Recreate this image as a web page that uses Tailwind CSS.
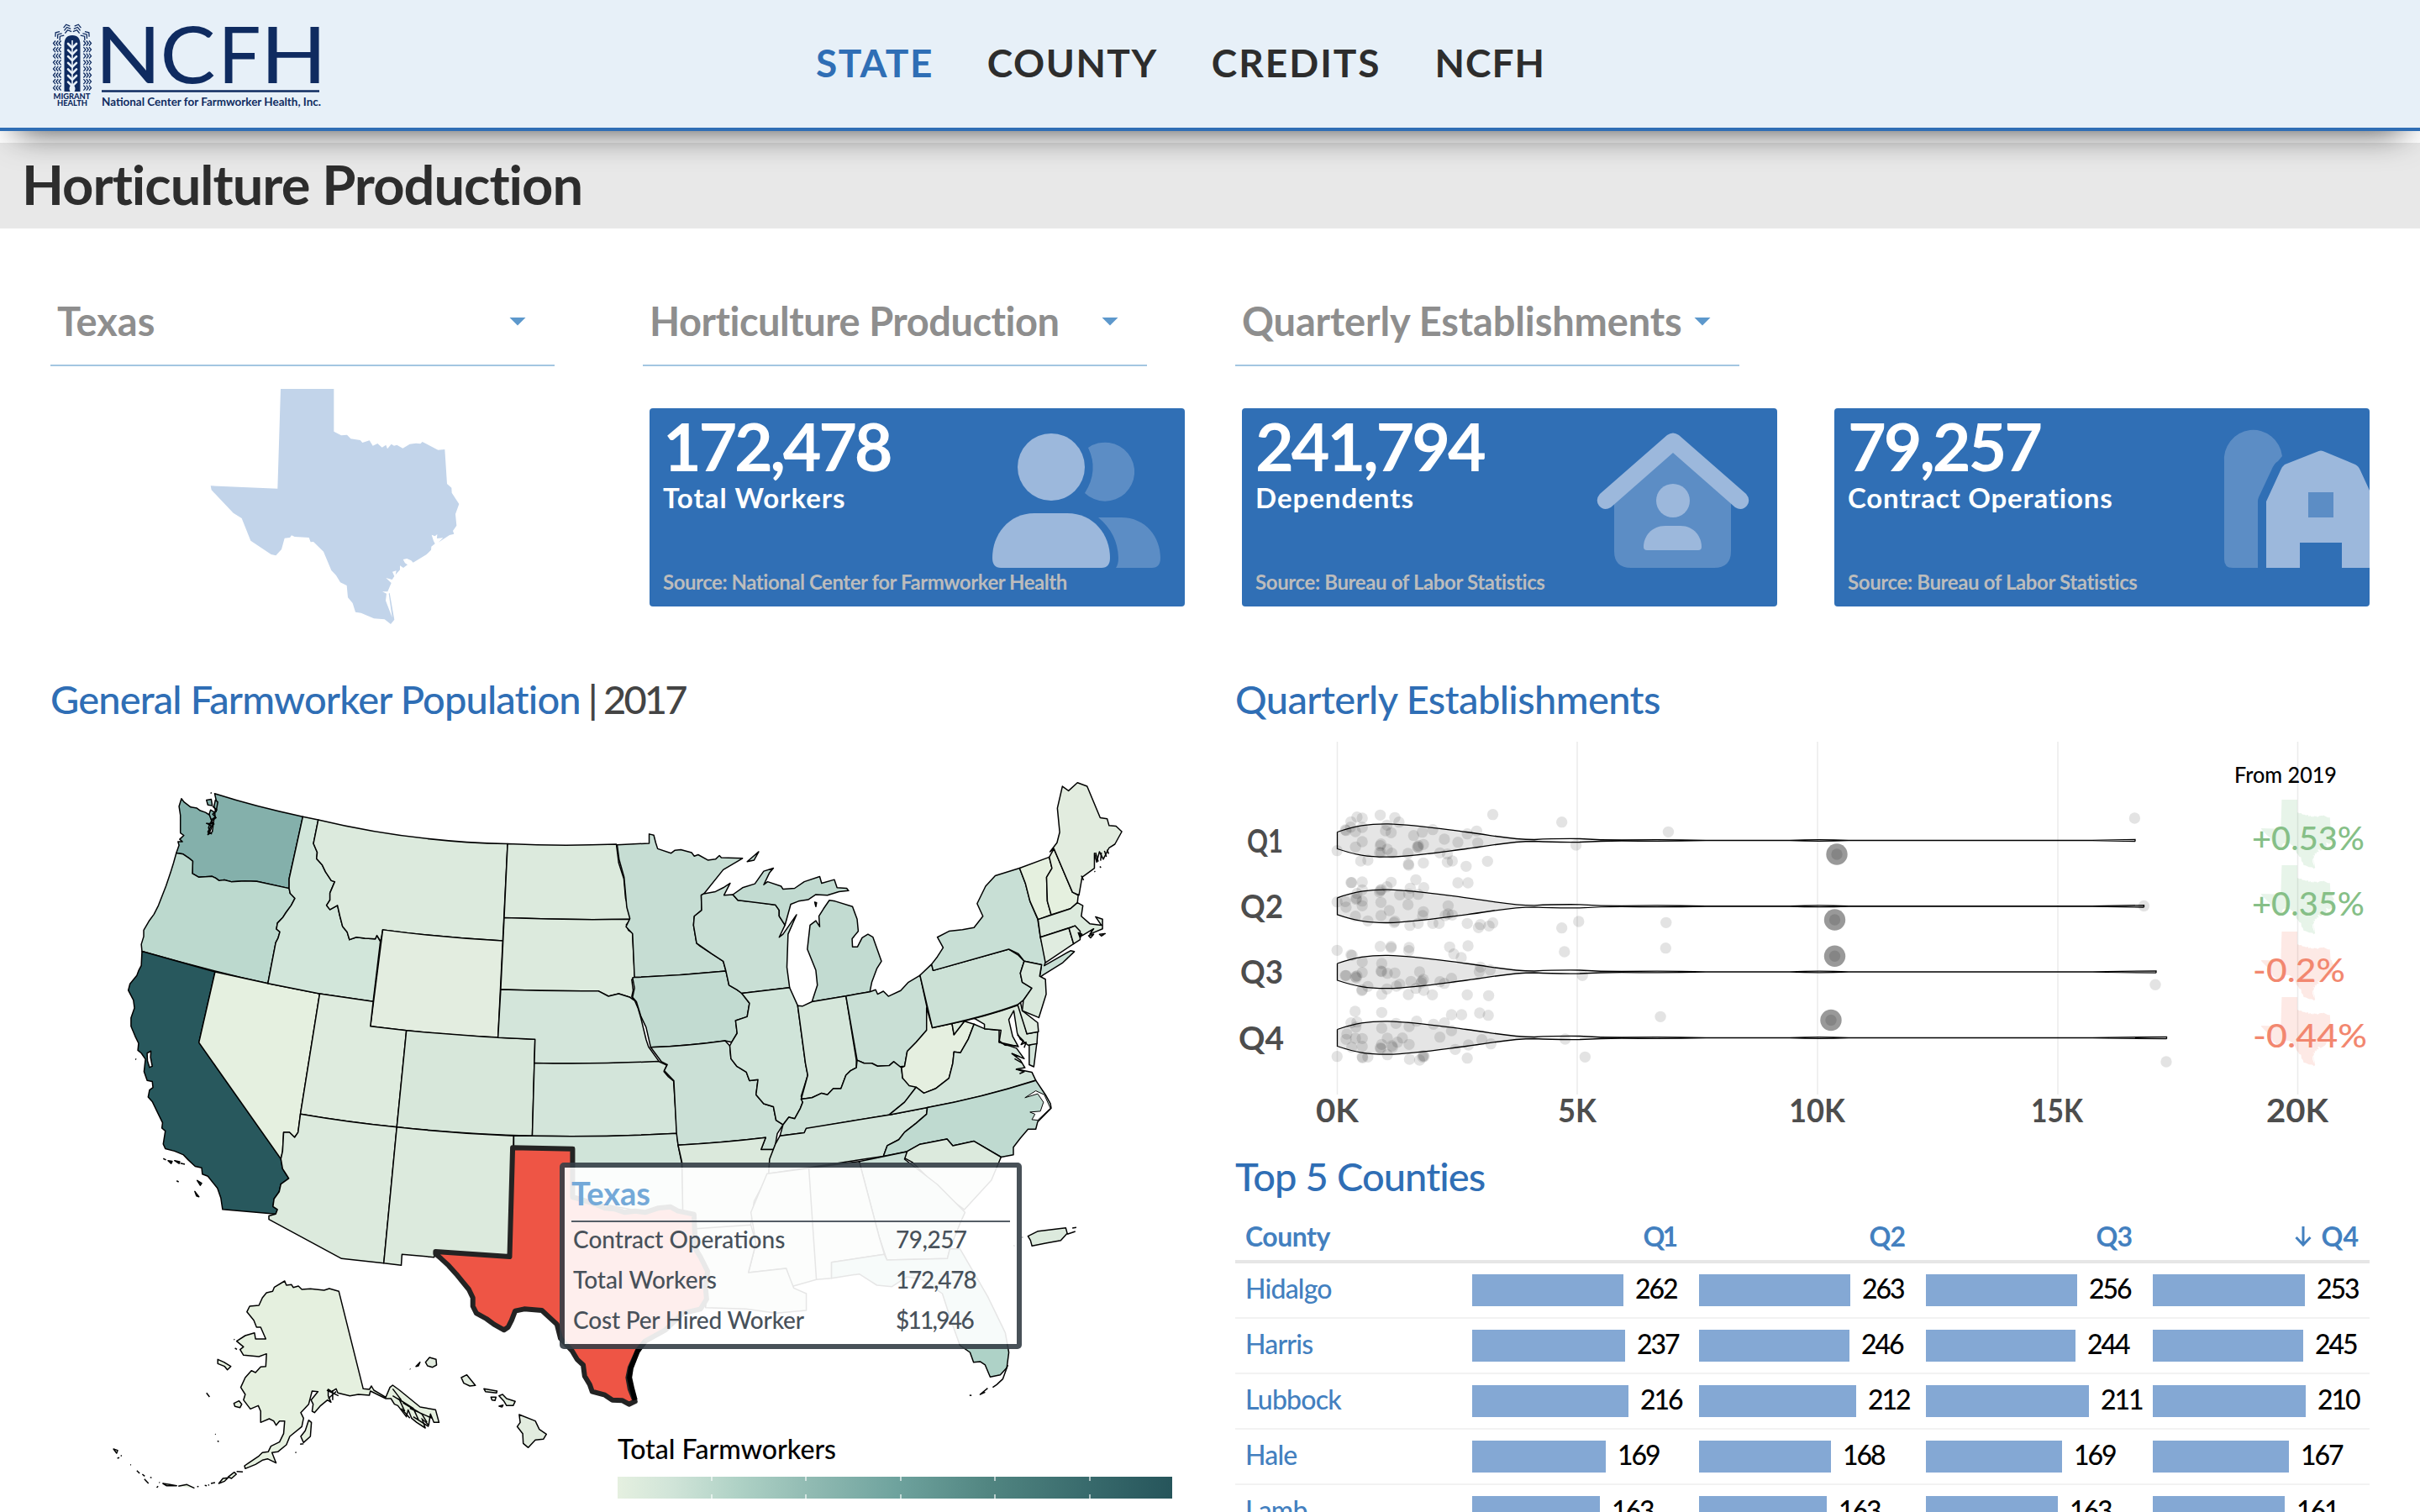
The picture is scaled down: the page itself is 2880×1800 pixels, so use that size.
<!DOCTYPE html>
<html lang="en">
<head>
<meta charset="utf-8">
<title>Horticulture Production</title>
<script src="https://cdn.jsdelivr.net/npm/@tailwindcss/browser@4"></script>
</head>
<body class="w-[2880px] h-[1800px] overflow-hidden bg-white font-['Lato',sans-serif] text-[#2d2d2d] leading-none">
<svg width="0" height="0" class="absolute">
  <defs>
    <path id="tx" d="M342,69H532V221L558,235L579,233L592,247L626,252L634,261L659,253L671,272L688,264L704,278L718,269L723,283L737,266L747,272L757,269L778,281L803,266L825,263L841,265L848,258L904,287L928,285L936,408L952,422L953,440L979,480L966,516L970,557L957,576L961,587L945,591L905,617L922,601L900,603L901,588L893,595L881,590L888,612L893,622L880,632L879,644L862,661L815,689L808,682L793,675L779,678L786,691L795,697L780,708L768,700V715L752,733L755,718L741,722L748,738L740,750L718,744L737,762L724,793L705,793L720,800L717,825L740,885L728,800L731,797L748,893L735,909L713,892L675,889L629,869L609,866L599,834L582,814L578,771L555,760L540,735L523,717L495,650L459,615L449,616L443,600L392,597L381,592L375,600L356,602L345,642L325,664L308,660L235,611L203,531L173,512L95,430L92,415L331,425Z"/>
    <linearGradient id="ramp"><stop offset="0" stop-color="#e5f0e0"/><stop offset=".1" stop-color="#d0e4d8"/><stop offset=".22" stop-color="#aed1c5"/><stop offset=".35" stop-color="#90bab2"/><stop offset=".5" stop-color="#6fa39e"/><stop offset=".67" stop-color="#518581"/><stop offset=".85" stop-color="#386a6c"/><stop offset="1" stop-color="#26555b"/></linearGradient>
  </defs>
</svg>

<header class="relative z-10 h-[156px] border-b-4 border-[#2f6eb5] bg-[#e7f0f8] shadow-[0_20px_40px_-20px_rgba(0,0,0,0.75)] flex items-center">
  <svg class="ml-[56px] w-[344px] h-[120px] shrink-0" viewBox="56 14 344 120" fill="#0f2b60" font-family="Lato">
    <g fill="none" stroke="#0f2b60" stroke-width="1.3" id="wheat"></g>
    <path d="M76.500,107V51Q76.500,40 86,40T95.500,51V107H88.500Q91,103 87.500,99L86,97L84.500,99Q81,103 83.500,107Z"/>
    <path d="M86,46V104" stroke="#e7f0f8" stroke-width="1.6"/>
    <g fill="none" stroke="#e7f0f8" stroke-width="2.6" stroke-linecap="round" id="leaves"></g>
    <text x="63.500" y="115.500" font-size="8.500" font-weight="900" textLength="44" lengthAdjust="spacingAndGlyphs">MIGRANT</text>
    <text x="68" y="124" font-size="8.500" font-weight="900" textLength="36" lengthAdjust="spacingAndGlyphs">HEALTH</text>
    <g font-size="94"><text x="113" y="97" textLength="79" lengthAdjust="spacingAndGlyphs">N</text><text x="190.500" y="97" textLength="66" lengthAdjust="spacingAndGlyphs">C</text><text x="259.500" y="97" textLength="51" lengthAdjust="spacingAndGlyphs">F</text><text x="310" y="97" textLength="79" lengthAdjust="spacingAndGlyphs">H</text></g>
    <path d="M121,105.300H380V107.700H121Z"/>
    <text x="121" y="124" font-size="14" font-weight="700" textLength="261" lengthAdjust="spacingAndGlyphs">National Center for Farmworker Health, Inc.</text>
  </svg>
  <nav class="ml-[571px] pb-[2px] flex gap-[64px] text-[46px] tracking-[1.5px] font-bold whitespace-nowrap">
    <a class="text-[#2f6eb5]">STATE</a><a>COUNTY</a><a class="tracking-[2px]">CREDITS</a><a class="tracking-[1px]">NCFH</a>
  </nav>
</header>

<div class="mt-[14px] h-[102px] bg-[#e8e8e8] pl-[26px] pb-[3px] flex items-center">
  <h1 class="text-[65px] font-bold tracking-[-1px]">Horticulture Production</h1>
</div>

<main class="pl-[60px]">
  <section class="grid grid-cols-[705px_705px_705px] h-[164px] items-end text-[47px] font-bold text-[#8e8e8e]">
    <div class="w-[600px] border-b-2 border-[#a3c6e1] pl-[8px] pr-[34px] pb-[28px] flex justify-between items-center"><span>Texas</span><i class="w-5 h-[10px] bg-[#5d98cc] [clip-path:polygon(0_0,100%_0,50%_100%)]"></i></div>
    <div class="w-[600px] border-b-2 border-[#a3c6e1] pl-[8px] pr-[34px] pb-[28px] flex justify-between items-center"><span class="tracking-[-0.5px]">Horticulture Production</span><i class="w-5 h-[10px] bg-[#5d98cc] [clip-path:polygon(0_0,100%_0,50%_100%)]"></i></div>
    <div class="w-[600px] border-b-2 border-[#a3c6e1] pl-[8px] pr-[34px] pb-[28px] flex justify-between items-center whitespace-nowrap"><span class="tracking-[-0.15px]">Quarterly Establishments</span><i class="w-5 h-[10px] bg-[#5d98cc] [clip-path:polygon(0_0,100%_0,50%_100%)]"></i></div>
  </section>

  <section class="grid grid-cols-[705px_705px_705px_705px] h-[372px] text-white font-bold">
    <svg class="ml-[160px] w-[360px] h-[320px] mt-[4px]" viewBox="0 0 1080 960" fill="#c2d4ea"><use href="#tx"/></svg>
    <article class="relative ml-[8px] mt-[50px] w-[637px] h-[236px] rounded bg-[#306fb5] overflow-hidden pl-[16px] pt-[5px]">
      <div class="text-[79px] tracking-[-3.3px]">172,478</div>
      <div class="mt-[6px] text-[33px] tracking-[1px]">Total Workers</div>
      <div class="mt-[72px] text-[24px] tracking-[-0.46px] text-[#bcbcbc]">Source: National Center for Farmworker Health</div>
      <svg class="absolute inset-0" width="637" height="236" viewBox="773 486 637 236">
        <g fill="#9cb8dc"><circle cx="1251" cy="556" r="40"/><path d="M1231,611H1270C1302,611 1321,637 1321,664Q1321,676 1311,676H1191Q1181,676 1181,664C1181,637 1200,611 1231,611Z"/></g>
        <g fill="#5c8dc5"><path d="M1295,533A35,35 0 1 1 1291,587Q1308,560 1295,533Z"/><path d="M1307,616H1334C1364,616 1381,640 1381,664Q1381,676 1371,676H1328Q1331,672 1331,664Q1330,635 1307,616Z"/></g>
      </svg>
    </article>
    <article class="relative ml-[8px] mt-[50px] w-[637px] h-[236px] rounded bg-[#306fb5] overflow-hidden pl-[16px] pt-[5px]">
      <div class="text-[79px] tracking-[-3.1px]">241,794</div>
      <div class="mt-[6px] text-[33px] tracking-[1px]">Dependents</div>
      <div class="mt-[72px] text-[24px] tracking-[-0.38px] text-[#bcbcbc]">Source: Bureau of Labor Statistics</div>
      <svg class="absolute inset-0" width="637" height="236" viewBox="1478 486 637 236">
        <path fill="#5c8dc5" d="M1921,590L1991,528L2060,590V656Q2060,676 2040,676H1941Q1921,676 1921,656Z"/>
        <path fill="#9cb8dc" d="M1984,518Q1991,513 1998,518L2078,588Q2084,595 2079,602Q2073,609 2065,604L1991,539L1917,604Q1909,609 1903,602Q1898,595 1904,588Z"/>
        <circle cx="1991" cy="596" r="20" fill="#9cb8dc"/><path fill="#9cb8dc" d="M1982,626H2000C2016,626 2025,639 2025,651Q2025,655 2021,655H1960Q1956,655 1956,651C1956,639 1965,626 1982,626Z"/>
      </svg>
    </article>
    <article class="relative ml-[8px] mt-[50px] w-[637px] h-[236px] rounded bg-[#306fb5] overflow-hidden pl-[16px] pt-[5px]">
      <div class="text-[79px] tracking-[-3.1px]">79,257</div>
      <div class="mt-[6px] text-[33px] tracking-[0.8px]">Contract Operations</div>
      <div class="mt-[72px] text-[24px] tracking-[-0.38px] text-[#bcbcbc]">Source: Bureau of Labor Statistics</div>
      <svg class="absolute inset-0" width="637" height="236" viewBox="2183 486 637 236">
        <path fill="#5c8dc5" d="M2647,551A34.500,35 0 0 1 2716,543L2711,549Q2706,552 2703,560L2688,592Q2687,594 2687,598V676H2657Q2647,676 2647,666Z"/>
        <path fill="#9cb8dc" fill-rule="evenodd" d="M2697,597L2714,560Q2715,556 2719,553L2757,538Q2762,535 2767,538L2803,553Q2807,555 2809,560L2826,597V676H2787V646H2737V676H2697Z"/>
        <path fill="#5c8dc5" d="M2747,586H2777V616H2747Z"/>
      </svg>
    </article>
  </section>

  <section class="grid grid-cols-[1410px_1350px] h-[992px] overflow-hidden">
    <div class="relative">
      <h2 class="h-[47px] pt-px text-[47px] font-medium tracking-[-0.85px] text-[#444] whitespace-nowrap"><span class="text-[#2f6eb5]">General Farmworker Population</span><span class="tracking-[-2.8px]"> | 2017</span></h2>
      <svg class="block w-[1380px] h-[945px]" viewBox="60 855 1380 945">
        <!-- western states -->
        <g transform="translate(120 880) scale(.40816 .42092)" stroke="#000" stroke-width="1.500" stroke-linejoin="round" class="[&_path]:[vector-effect:non-scaling-stroke]">
          <path fill="#84b0ab" d="M235,168L243,178L262,192L280,195L290,202L305,207L318,215L325,235L312,270L325,262L330,225L338,180L332,154Q455,192 589,219L549,395V422L455,402L420,401L380,403L360,398L345,400L335,393L325,388L285,390L267,380L268,345L258,337L240,325L220,322L228,300L225,290L238,290L230,283L242,272L232,265V215L228,190Z"/>
          <path fill="#84b0ab" d="M308,172L322,170L325,188L312,186ZM320,200L330,206L334,220L322,228L316,212ZM334,172L341,178L336,205L330,190ZM320,235L327,240L318,262L314,250Z"/>
          <path fill="none" d="M320,151L323,153M326,190L338,200L326,212L336,222L322,232L330,240L308,238L322,245L312,262L324,268"/>
          <path fill="#bcd9ce" d="M220,322L240,325L258,337L268,345L267,380L285,390L325,388L335,393L345,400L360,398L380,403L420,401L455,402L549,422L552,436L566,450L555,470L540,490L530,505L515,520L512,537L522,545L517,562L510,575L487,691Q300,650 120,600L118,580L125,558V540L140,515L155,495L168,470L190,415L203,378L212,350Z"/>
          <path fill="#28585d" d="M120,600L333,658L286,858L525,1187L530,1215L540,1230L548,1242L525,1258L520,1280L505,1300L502,1322L515,1330L510,1343L355,1330L350,1298L340,1270L312,1236L296,1230L294,1212L275,1208L255,1190L240,1175L215,1165L188,1158L182,1145L188,1108L178,1100L180,1085L160,1045L150,1025L138,1012L142,992L152,985L150,968L135,965L126,940L130,905L118,888L108,880L110,860L100,840L88,812V788L98,760L95,738L80,710L85,692L105,668L110,655L118,640Z"/>
          <path fill="#fff" d="M135,888L146,882L145,900L150,925L142,928L136,910Z"/>
          <path fill="#28585d" d="M182,1186L190,1190M196,1192L208,1194L205,1200ZM215,1192L230,1195L228,1200ZM232,1199L245,1202M221,1249L227,1252M281,1248L294,1256L290,1262ZM274,1279L286,1294L279,1292ZM101,904L103,906"/>
          <path fill="#e5f0e0" d="M333,658L487,691L638,720L582,1060L575,1112L565,1126L550,1112H533L530,1165L525,1187L286,858Z"/>
          <path fill="#d2e6da" d="M589,219L634,228L620,295L631,320L629,338L645,355L655,375L672,400L682,403L668,435V455L658,470L668,482L690,470L697,500L705,530L718,545L725,567L745,560L770,563L800,565L805,555L815,572L794,742L638,720L487,691L510,575L517,562L522,545L512,537L515,520L530,505L540,490L555,470L566,450L552,436L549,422V395Z"/>
          <path fill="#dceadd" d="M634,228Q900,290 1186,296L1172,570Q1000,562 822,539L816,572L805,555L800,565L770,563L745,560L725,567L718,545L705,530L697,500L690,470L668,482L658,470L668,455V435L682,403L672,400L655,375L645,355L629,338L631,320L620,295Z"/>
          <path fill="#e3ede0" d="M822,539Q1000,562 1172,570L1158,844Q970,835 786,812Z"/>
          <path fill="#deebde" d="M638,720L794,742L786,812L891,824L863,1097Q720,1083 582,1060Z"/>
          <path fill="#d7e7da" d="M891,824Q1080,842 1266,849L1258,1122Q1060,1117 863,1097Z"/>
          <path fill="#dceadd" d="M582,1060Q720,1083 863,1097L825,1482L702,1469L490,1358V1348L510,1343L515,1330L502,1322L505,1300L520,1280L525,1258L548,1242L540,1230L530,1215L525,1187L530,1165L533,1112H550L565,1126L575,1112Z"/>
          <path fill="#dceadd" d="M863,1097Q1030,1115 1204,1122L1192,1465L975,1448L972,1465L878,1457L876,1488L825,1482Z"/>
          <path fill="#dceadd" d="M1186,296Q1345,303 1503,297L1510,350L1525,395L1530,450L1543,490L1545,509Q1360,512 1176,505Z"/>
          <path fill="#dceadd" d="M1176,505Q1360,512 1545,509L1532,525L1538,540L1550,548L1557,675L1548,680L1552,710L1548,728L1557,740L1543,730L1510,720L1480,727L1450,712Q1305,713 1166,708Z"/>
          <path fill="#d3e5da" d="M1166,708Q1305,713 1450,712L1480,727L1510,720L1543,730L1557,740L1566,760L1575,790L1590,850L1597,870L1628,912Q1440,920 1264,916L1266,849L1158,844Z"/>
          <path fill="#d3e5da" d="M1264,916Q1440,920 1626,911L1650,922L1642,940L1655,955L1670,967L1680,1115Q1470,1126 1258,1122Z"/>
          <path fill="#d0e4d9" d="M1204,1122H1258Q1470,1126 1680,1115L1683,1148L1694,1200L1700,1350L1600,1340L1380,1300V1155H1204Z"/>
        </g>
        <!-- eastern states -->
        <g transform="translate(700 880) scale(.45918 .35714)" stroke="#000" stroke-width="1.500" stroke-linejoin="round" class="[&_path]:[vector-effect:non-scaling-stroke]">
          <path fill="#c6ddd3" d="M75,352L158,347V316L170,320L175,345L180,365L215,380L225,370L240,368L268,378L275,390L285,385L310,403L330,400L340,388L345,395L400,397L350,435L300,515L293,520L294,570L275,590L273,620L281,680L290,690L320,715L350,740L357,773Q240,788 120,794L115,648L98,625L108,598L100,560L93,460L80,400Z"/>
          <path fill="#c2dbd1" d="M120,794Q240,788 357,773L365,820L385,835L398,847L418,880L412,925L382,938L386,980L372,1010L355,1005Q260,1022 162,1027L150,960L137,925L125,875L115,860L120,830L115,795Z"/>
          <path fill="#cbe0d6" d="M162,1027Q260,1022 355,1005L367,1022L370,1065L385,1090L410,1110L418,1138L440,1135L435,1185L455,1215L480,1225L487,1270L505,1285L490,1315L483,1368H448L460,1328Q350,1345 233,1353L229,1314L222,1138L197,1105L205,1085L190,1075Z"/>
          <path fill="#dbe9dc" d="M233,1353Q350,1345 460,1328L448,1368H483L470,1410L468,1448L430,1540L420,1630L246,1640L243,1410Z"/>
          <path fill="#c9dfd5" d="M300,515L330,508L350,495L368,480L352,520L375,518L388,537L430,542L485,552L495,570V590L510,620L495,660L505,650L540,585L518,650L515,760L522,828L398,847L385,835L365,820L357,773L350,740L320,715L281,680L273,620L275,590L294,570L293,520Z"/>
          <path fill="#d0e4d9" d="M398,847L522,828L543,888L563,1080L569,1120L552,1190L556,1210L550,1230L535,1265L520,1260L505,1285L487,1270L480,1225L455,1215L435,1185L440,1135L418,1138L410,1110L385,1090L370,1065L367,1022L372,1010L386,980L382,938L412,925L418,880Z"/>
          <path fill="#c2dbd1" d="M580,875L594,820L590,770L568,700L575,620L590,605L600,625L598,590L610,565L625,537L640,540L685,558L697,600L700,640L684,665L685,692L698,692L710,662L725,650L738,660L760,740L748,765L735,810L730,842L668,856Z"/>
          <path fill="#c2dbd1" d="M375,518L400,495L432,482L455,440L480,430L470,445L455,485L465,475L500,490L505,500L535,497L560,475L600,458L605,480L638,468L645,495L670,497L675,505L650,508L620,520L590,518L570,535L545,540L525,550L510,620L495,590V570L485,552L388,537ZM412,408L442,375L430,403ZM587,543L592,545L590,558Z"/>
          <path fill="#d5e6da" d="M543,888L555,890L580,875L668,856L695,1070L695,1095L680,1105L668,1120L655,1165L635,1165L620,1185L605,1180L580,1195L552,1200L569,1120L563,1080Z"/>
          <path fill="#c9dfd5" d="M668,856L730,842L745,835L750,850L765,840L778,857L810,838L830,810L860,787L879,900L877,970L850,1010L827,1040L820,1090L805,1092L792,1075L780,1088L750,1090L735,1080L715,1080L697,1070Z"/>
          <path fill="#cce1d6" d="M552,1200L580,1195L605,1180L620,1185L635,1165L655,1165L668,1120L680,1105L695,1095L697,1070L715,1080L735,1080L750,1090L780,1088L792,1075L812,1095L815,1130L850,1160L820,1210L780,1252Q670,1275 565,1300L560,1312L497,1322L505,1285L520,1260L535,1265L550,1230L556,1210Z"/>
          <path fill="#d3e5da" d="M497,1322L560,1312L565,1297Q670,1275 780,1252L879,1228L877,1250L850,1280L820,1310L805,1335L775,1355L765,1390L468,1448L470,1400L485,1350Z"/>
          <path fill="#e5efe0" d="M877,895L892,962L943,948L948,985L960,965L975,940L1000,950L985,1000L965,1045L948,1042L945,1080L935,1130L900,1165L870,1180L850,1160L832,1155L815,1130L812,1095L820,1090L827,1040L850,1010L877,970Z"/>
          <path fill="#d3e5da" d="M1000,950L1027,965L1065,970L1065,1010L1110,1030L1130,1065L1098,1048L1120,1070L1132,1095L1110,1100L1150,1110L1160,1137Q1020,1195 879,1228L780,1252L820,1210L850,1160L870,1180L900,1165L935,1130L945,1080L948,1042L965,1045L985,1000ZM1143,1020L1163,1010L1155,1092L1143,1085Z"/>
          <path fill="#dbe9dc" d="M943,948Q1030,925 1118,885L1137,982L1165,975L1163,1015L1140,1020L1120,1000L1112,980L1103,905L1090,935L1100,990L1115,1025L1065,1010L1070,970L1027,965V950L1000,930L975,940L948,985Z"/>
          <path fill="none" d="M1065,1005L1080,1020L1110,1022M1112,985L1128,1005L1122,1018L1135,1010L1130,1028M1098,1048L1118,1058M1105,1065L1125,1080M1108,1100L1130,1108L1118,1115"/>
          <path fill="#e0ece0" d="M1113,885L1120,875L1125,905L1165,945L1167,975L1137,982Z"/>
          <path fill="#cce1d6" d="M860,787L890,750L894,771L1090,700L1115,720L1130,740L1120,780L1125,810L1150,830L1128,870L1113,885Q1030,925 892,962Z"/>
          <path fill="#c8dfd5" d="M894,771L890,750L905,725L920,695L905,660L935,640L970,635L1000,628L1023,590L1008,548L1030,490L1055,455L1118,430L1133,480L1145,540L1165,600L1172,660L1187,735L1182,755L1250,705L1260,708L1230,745L1180,785L1170,795L1175,752L1130,740L1115,715L1090,700Z"/>
          <path fill="#d9e8dc" d="M1130,740L1175,752L1170,790L1185,800L1187,850L1168,928L1125,905L1128,870L1150,830L1125,810L1120,780Z"/>
          <path fill="#e5f0df" d="M1118,430L1195,393L1202,430L1188,460L1190,540L1200,585L1166,601L1145,540L1133,480Z"/>
          <path fill="#e5f0df" d="M1195,393L1207,365L1255,510L1270,520L1268,545L1250,565L1200,585L1190,540L1188,460L1202,430Z"/>
          <path fill="#e2ecdf" d="M1207,365L1197,375L1215,345L1222,310L1216,230L1229,157L1245,172L1268,145L1293,157L1327,262L1345,265L1350,288L1368,290L1383,308L1365,350L1350,362L1335,400L1325,375L1318,410L1312,380V430L1280,460L1272,520L1255,510Z"/>
          <path fill="none" d="M1315,378L1322,408M1330,378L1328,405M1338,372L1343,392M1345,368L1349,382M1278,455L1284,470M1312,440L1314,442M1326,424L1329,428"/>
          <path fill="#dceadd" d="M1166,601L1250,565L1268,545L1282,555L1278,590L1300,615L1330,620L1315,592L1333,600V632L1300,650L1310,632L1280,655L1262,622L1172,660ZM1297,655L1310,650L1302,662ZM1325,650L1340,648L1330,656Z"/>
          <path fill="#e0ece0" d="M1172,660L1246,630L1258,682L1185,745Z"/>
          <path fill="#e0ece0" d="M1246,630L1262,622L1275,640V668L1258,682ZM1270,645L1280,650L1275,662Z"/>
          <path fill="#bfdad0" d="M879,1228Q1020,1195 1155,1140L1160,1137L1185,1185L1198,1215L1200,1230L1165,1275L1160,1300L1140,1300L1120,1330L1102,1360V1385L1070,1393L1000,1340L945,1355L930,1333L860,1350L825,1375L765,1390L775,1355L805,1335L820,1310L850,1280L877,1250Z"/>
          <path fill="#fff" stroke-width="1" d="M1132,1195L1160,1172L1182,1185L1198,1230L1165,1270L1150,1268L1158,1250L1145,1243L1172,1240L1180,1210L1165,1182Z"/>
          <path fill="#dceadd" d="M825,1375L860,1350L930,1333L945,1355L1000,1340L1070,1393L1045,1470L975,1568L935,1530L840,1410L818,1395Z"/>
        </g>
        <!-- southern states, Texas, Hawaii, Puerto Rico -->
        <g transform="translate(480 1300) scale(.59949 .33333)" stroke="#000" stroke-width="1.500" stroke-linejoin="round" class="[&_path]:[vector-effect:non-scaling-stroke]">
          <path fill="#c9dfd5" d="M905,248L1000,213L995,240L1060,330L1115,430L1105,470L1085,560L1080,595L960,600L945,520Z"/>
          <path fill="#dbe9dc" d="M805,272L905,248L945,520L955,580L850,608V665L820,670ZM722,292L805,272L820,670L770,695L760,630L685,645L700,540L690,430Z"/>
          <path fill="#dbe9dc" d="M580,488L690,475L700,540L685,645L760,630L775,700L800,720V780L740,790L680,775L600,770L604,640L580,560Z"/>
          <path fill="#aed2c7" d="M850,608L955,580L960,600L1080,595L1085,560H1105L1160,730L1195,860L1202,930L1198,985L1185,1010L1165,1018L1155,975L1145,963L1132,965L1125,930L1105,905L1090,830L1070,720L1030,670L1000,660L970,695L940,690L905,650L850,665Z"/>
          <path fill="none" d="M1200,975L1190,1025L1178,1045L1170,1055M1160,1058L1145,1080L1155,1072M1124,1083L1128,1084"/>
          <path fill="#dceadd" d="M1240,515L1260,497L1315,485L1318,505L1305,530L1275,540L1248,550L1245,530ZM1318,508L1334,498M1328,486L1336,484M1229,518V520M1211,548L1214,550"/>
          <path fill="#e2ecdf" d="M44,965L52,948L65,955L66,975L58,983L48,978ZM25,980L33,965L30,978ZM115,1020L126,1010L143,1048L132,1050L120,1040ZM160,1060L186,1068L185,1075L163,1070ZM174,1090L184,1090L182,1102L176,1100ZM190,1085L197,1080L205,1095L222,1105L218,1120L205,1120L200,1105ZM190,1122L198,1118L196,1125ZM230,1152L262,1175L270,1205L284,1222L278,1240L262,1243L248,1270L238,1255L237,1220L226,1195L232,1180ZM13,989L14,990"/>
          <path fill="#ee5545" stroke="#232323" stroke-width="6" d="M217,199L336,203V375L355,385L380,400L400,415L420,418L440,430L460,425L480,430L505,415L530,410L545,425L577,437L580,560L590,590L604,640L600,700L602,740L590,775L555,790L520,850L480,890L465,925L450,985L446,1020L450,1060L460,1105L448,1115L435,1102L415,1100L400,1082L375,1070L370,1045L360,1015L357,975L345,955L335,925L312,880L305,830L275,780L240,775L222,782L215,815L208,840L200,850L180,830L165,810L145,790L138,765V735L130,705L105,650L90,620L75,595L64,578V570L211,588Z"/>
          <path fill="none" stroke="#000" stroke-width="6" d="M480,890L465,925L452,985L449,1020L454,1060L460,1100"/>
        </g>
        <!-- Alaska -->
        <g transform="translate(100 1480) scale(.40816 .33333)" fill="#e5f0df" stroke="#000" stroke-width="1.500" stroke-linejoin="round" class="[&_path]:[vector-effect:non-scaling-stroke]">
          <path d="M585,135L590,150L605,148L610,158L625,153L635,165L660,163L700,168L715,162L743,172L814,520L832,522L838,510L845,525L880,550L892,515L900,507L920,525L980,585L1025,595L1035,640L1020,640L1010,610L1005,650L985,625L995,660L970,640L955,625L945,595L940,620L915,580L905,575L895,555L880,555L835,528L832,543L800,540L775,545L740,535L735,520L722,530L712,522V545L720,568L710,560L690,580L672,605L665,600L668,575L662,560L682,530L665,528L655,575L632,605L640,625L635,655L600,690L590,720L565,745L548,748L560,785L535,770L520,775L500,790L470,805L468,795L480,785L510,760L520,748L537,745L545,725L570,710L582,680L585,635L570,635L560,650L553,635L540,627L515,640V600L508,580L485,592L465,560L470,540L457,515L470,480L488,455L500,462L515,442L530,440L532,395L510,405L465,400L455,380L465,370L445,350L470,330L497,320L500,342H530L515,300L503,300L495,275L475,245L483,225L510,222L520,195L532,177L550,172L555,157Z"/>
          <path d="M900,545L920,560L935,600M915,555L960,590L975,630M930,570L985,610L1000,640M950,590L1015,625M925,590L950,625M960,620L1005,655M900,520L925,560M708,525L742,545M712,555L735,530M725,525V560"/>
          <path d="M655,632L663,640L660,690L640,712L632,690L645,670ZM437,572L452,563L460,575L455,587L440,583ZM390,415L408,425L428,440L418,452L410,440L390,430ZM357,535L366,549M440,375L446,379M437,343L439,345M382,682L384,683M389,706L393,709M616,747L619,748M86,735L98,740L95,750ZM97,768L103,766M107,758L110,760M135,791L137,792M154,812L162,822M170,825L177,832M176,842L188,858M193,836L197,838M212,873L216,868M219,854L221,855M230,858L250,862L270,866L240,866ZM275,868L300,862L322,875M330,870L334,868M352,865L358,866M362,864L365,863M370,858L382,855M393,858L405,840L420,838L410,850ZM420,835L438,818L444,825L430,840ZM445,815L463,817M630,718L640,716"/>
        </g>
        <text x="735" y="1737" font-family="Lato" font-size="33" font-weight="500" fill="#000" textLength="260" lengthAdjust="spacingAndGlyphs">Total Farmworkers</text>
        <path fill="url(#ramp)" d="M735,1758H1395V1784H735Z"/>
        <path stroke="#fff" stroke-opacity=".8" stroke-width="1.500" d="M847,1758V1763M847,1779V1784M959,1758V1763M959,1779V1784M1072,1758V1763M1072,1779V1784M1184,1758V1763M1184,1779V1784M1297,1758V1763M1297,1779V1784"/>
      </svg>
      <div class="absolute left-[606px] top-[576px] w-[550px] h-[222px] rounded-[5px] border-6 border-[#343e46]/90 bg-white/90 bg-clip-padding pl-[8px] text-[#48515a]">
        <div class="mt-[11px] w-[522px] pb-[14px] border-b-2 border-[#555d66] text-[38px] font-bold text-[#74a9d8]">Texas</div>
        <div class="grid grid-cols-[384px_1fr] text-[28px] leading-[48px] pl-[2px] mt-[-4px] whitespace-nowrap font-medium">
          <span>Contract Operations</span><span class="tracking-[-0.5px]">79,257</span>
          <span>Total Workers</span><span class="tracking-[-1.2px]">172,478</span>
          <span class="tracking-[-0.2px]">Cost Per Hired Worker</span><span class="tracking-[-1.7px]">$11,946</span>
        </div>
      </div>
    </div>

    <div>
      <h2 class="h-[47px] pt-px text-[47px] font-medium tracking-[-0.6px] text-[#2f6eb5]">Quarterly Establishments</h2>
      <svg class="block w-[1380px] h-[521px]" viewBox="1470 855 1380 521" font-family="Lato">
        <path stroke="#ebebeb" stroke-width="1.500" d="M1591.500,883V1303M1877,883V1303M2163,883V1303M2449,883V1303M2734.500,883V1303"/>
        <g id="dots" fill="#000" fill-opacity=".11"></g>
        <g id="violins" fill="#000" fill-opacity=".1" stroke="#000" stroke-width="1.300"></g>
        <g fill="#4d4d4d" font-size="39" font-weight="700">
          <g><text x="1484" y="1014.700" textLength="43" lengthAdjust="spacingAndGlyphs">Q1</text><text x="1476" y="1093" textLength="51" lengthAdjust="spacingAndGlyphs">Q2</text><text x="1476" y="1171" textLength="51" lengthAdjust="spacingAndGlyphs">Q3</text><text x="1474" y="1249.500" textLength="54" lengthAdjust="spacingAndGlyphs">Q4</text></g>
          <text x="1566" y="1336" textLength="51" lengthAdjust="spacingAndGlyphs">0K</text><text x="1854" y="1336" textLength="46" lengthAdjust="spacingAndGlyphs">5K</text><text x="2129" y="1336" textLength="67" lengthAdjust="spacingAndGlyphs">10K</text><text x="2417" y="1336" textLength="62" lengthAdjust="spacingAndGlyphs">15K</text><text x="2697" y="1336" textLength="74" lengthAdjust="spacingAndGlyphs">20K</text>
        </g>
        <text x="2659" y="932" font-size="27" font-weight="500" fill="#000" textLength="122" lengthAdjust="spacingAndGlyphs">From 2019</text>
        <g fill="#58b060" fill-opacity=".14"><use href="#tx" transform="translate(2682 945.300) scale(.0978)"/><use href="#tx" transform="translate(2682 1023.300) scale(.0978)"/></g>
        <g fill="#ee5533" fill-opacity=".13"><use href="#tx" transform="translate(2682 1102.300) scale(.0978)"/><use href="#tx" transform="translate(2682 1180.300) scale(.0978)"/></g>
        <g font-size="39" font-weight="500" fill="#86bf87"><text x="2680" y="1012" textLength="134" lengthAdjust="spacingAndGlyphs">+0.53%</text><text x="2680" y="1090" textLength="134" lengthAdjust="spacingAndGlyphs">+0.35%</text></g>
        <g font-size="39" font-weight="500" fill="#f2876f"><text x="2681" y="1169" textLength="110" lengthAdjust="spacingAndGlyphs">-0.2%</text><text x="2681" y="1247" textLength="136" lengthAdjust="spacingAndGlyphs">-0.44%</text></g>
      </svg>
      <h2 class="h-[47px] pt-px text-[47px] font-medium tracking-[-0.9px] text-[#2f6eb5]">Top 5 Counties</h2>
      <div class="h-[81px] w-[1350px] border-b-4 border-[#e6e6e6] grid grid-cols-[270px_270px_270px_270px_270px] items-end pb-[12px] text-[32px] font-bold text-[#4380bf]">
        <span class="pl-[12px] tracking-[-0.5px]">County</span><span class="text-right pr-[16px] tracking-[-3px]">Q1</span><span class="text-right pr-[13px] tracking-[-1px]">Q2</span><span class="text-right pr-[13px] tracking-[-1px]">Q3</span>
        <span class="flex justify-end items-center gap-[12px] pr-[13px]"><svg width="20" height="24" viewBox="0 0 20 24" fill="none" stroke="#4380bf" stroke-width="3"><path d="M10,0V21M1.500,13L10,22L18.500,13"/></svg>Q4</span>
      </div>
      <div id="rows"></div>
    </div>
  </section>
</main>

<script>
const NS='http://www.w3.org/2000/svg';
const el=(p,t,a)=>{const e=document.createElementNS(NS,t);for(const k in a)e.setAttribute(k,a[k]);p.appendChild(e);};
// quarterly table
const rows=[['Hidalgo',[262,180],[263,180],[256,180],[253,181]],['Harris',[237,182],[246,179],[244,178],[245,179]],['Lubbock',[216,186],[212,187],[211,194],[210,182]],['Hale',[169,159],[168,157],[169,162],[167,162]],['Lamb',[163,152],[163,152],[163,157],[161,157]]];
document.getElementById('rows').innerHTML=rows.map(([n,...q])=>`<div class="h-[66px] w-[1350px] border-b-2 border-[#f2f2f2] grid grid-cols-[270px_270px_270px_270px_270px] items-center text-[32px] font-medium"><span class="pl-[12px] pb-[4px] tracking-[-0.8px] text-[#4380bf]">${n}</span>${q.map(([v,w])=>`<span class="flex items-center pl-[12px] gap-[14px] text-black"><i class="h-[38px] bg-[#84a8d4]" style="width:${w}px"></i><span class="pb-[4px] tracking-[-2px]">${v}</span></span>`).join('')}</div>`).join('');
// distribution of establishments per state
const yc=[1000.5,1078.8,1157,1235.5],xe=[2541,2551.5,2566,2578.5];
const vio=document.getElementById('violins'),dots=document.getElementById('dots');
yc.forEach((y,i)=>{const h=s=>`C1612,${y-s*17} 1628,${y-s*20} 1652,${y-s*19.7}C1684,${y-s*19} 1720,${y-s*13} 1745,${y-s*10}C1778,${y-s*6} 1795,${y-s*1} 1826,${y-s*1}Q1850,${y-s*2.3} 1880,${y-s*2}Q1905,${y-s*.5} 1930,${y-s*.5}Q1980,${y-s*1.3} 2030,${y-s*.2}L2130,${y-s*.2}Q2165,${y-s*1.6} 2200,${y-s*.2}L2490,${y-s*.2}L${xe[i]},${y-s*1.2}`;
el(vio,'path',{d:`M1591.5,${y-10}${h(1)}V${y+1.2}M1591.5,${y-10}V${y+10}${h(-1)}`,fill:'none'});
el(vio,'path',{d:`M1591.5,${y-10}C1612,${y-17} 1628,${y-20} 1652,${y-19.7}C1684,${y-19} 1720,${y-13} 1745,${y-10}C1778,${y-6} 1795,${y-1} 1826,${y}C1795,${y+1} 1778,${y+6} 1745,${y+10}C1720,${y+13} 1684,${y+19} 1652,${y+19.7}C1628,${y+20} 1612,${y+17} 1591.5,${y+10}Z`,stroke:'none'});});
const pts=[331,355,347,338,361,342,409,331,448,340,459,356,709,329,893,356,1177,391,316,384,318,386,330,374,343,390,361,375,427,367,423,387,438,394,498,404,521,392,549,383,580,417,641,398,666,388,669,430,616,428,361,426,343,445,411,434,409,440,407,465,411,465,428,453,440,467,294,458,483,468,511,440,508,444,510,446,524,436,568,466,588,470,357,495,376,492,484,506,485,510,524,502,588,499,601,495,638,514,695,496,931,438,
331,572,333,572,361,570,438,571,504,562,616,573,643,573,427,587,489,592,525,590,361,598,409,600,412,597,407,606,461,616,485,613,510,614,347,611,345,628,294,641,316,640,318,660,361,638,361,655,345,632,411,643,483,651,433,672,343,692,411,690,376,709,448,710,446,715,524,676,522,690,590,655,590,684,582,690,601,688,488,725,510,718,549,718,566,718,641,718,676,722,671,733,699,727,709,716,893,734,938,711,1171,715,
294,814,409,800,438,800,438,805,486,804,485,815,594,802,643,798,605,827,625,840,331,830,334,832,900,819,1170,806,361,855,413,861,411,888,413,890,361,893,428,896,448,895,316,904,318,904,343,908,345,912,347,905,514,891,676,874,673,890,702,884,599,914,491,925,524,918,520,924,518,930,568,926,580,932,461,935,376,943,361,955,360,958,427,952,452,942,413,971,484,972,504,950,525,957,548,973,641,973,698,976,948,904,
342,1032,413,1036,331,1073,347,1070,344,1088,451,1075,506,1067,599,1044,626,1044,674,1038,697,1046,551,1078,580,1073,413,1092,486,1086,599,1101,1156,1051,320,1113,318,1132,361,1129,343,1128,428,1128,468,1127,455,1142,440,1155,442,1160,413,1150,409,1162,411,1165,333,1160,361,1157,486,1150,568,1124,680,1133,644,1152,704,1148,609,1168,902,1131,294,1193,361,1195,362,1198,376,1195,428,1187,487,1203,514,1206,524,1190,526,1193,522,1195,641,1199,955,1195];
for(let i=0;i<pts.length;i+=2)el(dots,'circle',{cx:1460+pts[i]/2.24,cy:860+pts[i+1]/3,r:6.7});
[[2540.4,974],[2551.4,1078.5],[2565,1172.3],[2578,1264]].forEach(([x,y])=>el(dots,'circle',{cx:x,cy:y,r:6.7}));
[[2186,1017],[2183.5,1095],[2183.5,1138.3],[2179,1214.5]].forEach(([x,y])=>{el(dots,'circle',{cx:x,cy:y,r:12.7,'fill-opacity':.4});el(dots,'circle',{cx:x,cy:y,r:6.7,'fill-opacity':.13});});
// wheat emblem
const wh=document.getElementById('wheat'),lv=document.getElementById('leaves');
for(let r=0;r<8;r++){const y=49.5+r*7.6;for(let k=0;k<3;k++){el(wh,'path',{d:`M${66+k*3.3},${y-3}L${63.5+k*3.3},${y}L${66+k*3.3},${y+3}M${106-k*3.3},${y-3}L${108.5-k*3.3},${y}L${106-k*3.3},${y+3}`});}}
for(const [x,y,a] of [[70,40,-50],[80,32,-15],[92,32,15],[102,40,50]])for(let k=0;k<3;k++)el(wh,'path',{transform:`translate(${x} ${y}) rotate(${a})`,d:`M-4,${k*3.4-2}L0,${k*3.4-5}L4,${k*3.4-2}`});
for(let r=0;r<7;r++){const y=50+r*7.6;el(lv,'path',{d:`M86,${y+5}L81,${y}M86,${y+5}L91,${y}`});}
</script>
</body>
</html>
